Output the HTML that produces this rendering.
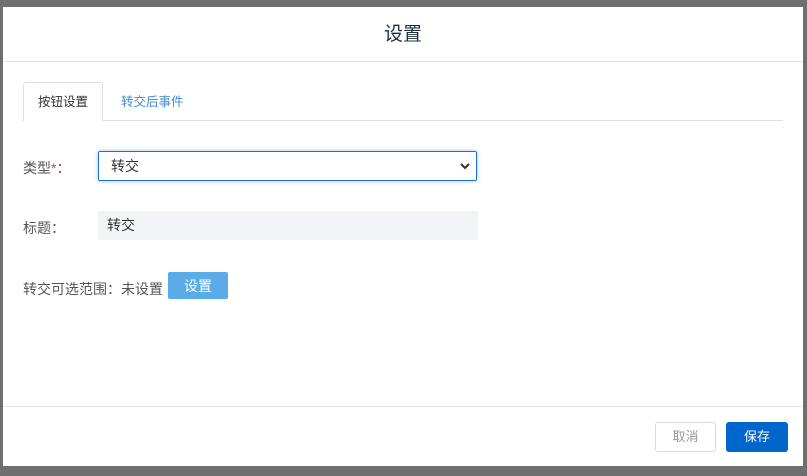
<!DOCTYPE html><html><head><meta charset="utf-8"><style>
body{margin:0;width:807px;height:476px;background:#6f6f6f;position:relative;overflow:hidden;font-family:"Liberation Sans","Noto Sans CJK SC",sans-serif;}
.m{position:absolute;left:3px;top:7px;width:800px;height:459px;background:#fff;}
.a{position:absolute;}
</style></head><body>
<div class="m"></div>
<div class="a" style="left:3px;top:22px;width:800px;text-align:center;font-size:19px;color:#1f2d3d;line-height:26px">设置</div>
<div class="a" style="left:3px;top:61px;width:800px;height:1px;background:#e4e6ea"></div>
<div class="a" style="left:23px;top:120px;width:760px;height:1px;background:#dcdfe6"></div>
<div class="a" style="left:23px;top:82px;width:78px;height:38px;border:1px solid #dcdfe6;border-bottom:1px solid #fff;border-radius:3px 3px 0 0;background:#fff;font-size:12.5px;color:#333;text-align:center;line-height:38px">按钮设置</div>
<div class="a" style="left:121px;top:82px;font-size:12.5px;color:#3d8ad6;line-height:40px">转交后事件</div>
<div class="a" style="left:23px;top:158px;font-size:14px;color:#555;line-height:20px">类型<span style="color:#e33">*</span>：</div>
<div class="a" style="left:98px;top:151px;width:377px;height:28px;border:1px solid #1a6fd0;border-radius:2px;box-shadow:0 0 4px rgba(60,140,230,.5);font-size:14px;color:#333;line-height:28px;text-indent:12px">转交
<svg class="a" style="right:6px;top:10px" width="10" height="8" viewBox="0 0 10 8"><path d="M1 2l4 4 4-4" stroke="#333" stroke-width="2" fill="none"/></svg></div>
<div class="a" style="left:23px;top:218px;font-size:14px;color:#555;line-height:20px">标题：</div>
<div class="a" style="left:98px;top:211px;width:380px;height:29px;background:#f3f4f7;border-radius:2px;font-size:14px;color:#333;line-height:29px;text-indent:9px">转交</div>
<div class="a" style="left:23px;top:279px;font-size:14px;color:#555;line-height:20px">转交可选范围：未设置</div>
<div class="a" style="left:168px;top:272px;width:60px;height:27px;background:#5aabe6;border-radius:2px;color:#fff;font-size:14px;text-align:center;line-height:28px">设置</div>
<div class="a" style="left:3px;top:406px;width:800px;height:1px;background:#e4e6ea"></div>
<div class="a" style="left:655px;top:422px;width:59px;height:28px;border:1px solid #d6dbe3;border-radius:3px;color:#999;font-size:13px;text-align:center;line-height:28px">取消</div>
<div class="a" style="left:726px;top:422px;width:62px;height:30px;background:#0066cc;border-radius:3px;color:#fff;font-size:13px;text-align:center;line-height:30px">保存</div>
</body></html>
